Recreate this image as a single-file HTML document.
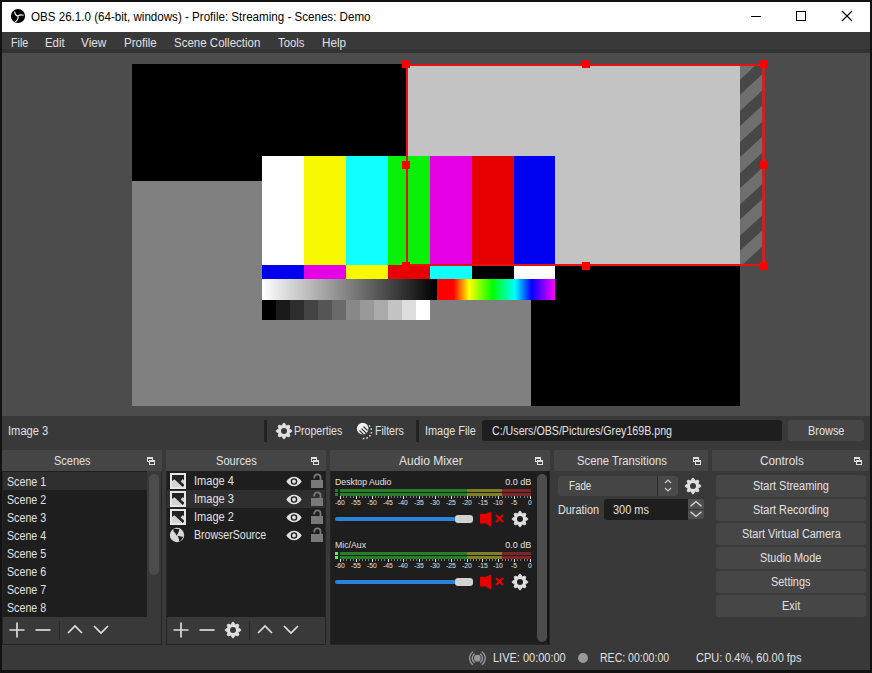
<!DOCTYPE html>
<html><head><meta charset="utf-8">
<style>
*{box-sizing:border-box;margin:0;padding:0}
html,body{width:872px;height:673px;overflow:hidden;background:#121212;font-family:"Liberation Sans",sans-serif;position:relative}
.a{position:absolute}
.t{position:absolute;white-space:pre}
svg{position:absolute;overflow:visible}
</style></head><body>
<div class="a" style="left:2px;top:2px;width:868px;height:30px;background:#fff;"></div>
<svg style="left:11px;top:9px" width="14" height="14" viewBox="0 0 14 14"><circle cx="7" cy="7" r="7.1" fill="#000"/><path d="M7 7Q4.2 6.6 3.6 2.6M7 7Q9.2 5.2 12.6 6.2M7 7Q7.6 10.6 4.4 12.9" fill="none" stroke="#fff" stroke-width="1.1"/></svg>
<div class="a" style="left:751px;top:16px;width:10px;height:1px;background:#000;"></div>
<div class="a" style="left:796px;top:11px;width:10px;height:10px;border:1px solid #000"></div>
<svg style="left:842px;top:11px" width="10" height="10"><path d="M0 0L10 10M10 0L0 10" stroke="#000" stroke-width="1.1"/></svg>
<div class="a" style="left:2px;top:32px;width:868px;height:21px;background:#3a393a;"></div>
<div class="a" style="left:2px;top:49px;width:868px;height:4px;background:#353435;"></div>
<div class="a" style="left:2px;top:53px;width:868px;height:363px;background:#4c4c4c;"></div>
<div class="a" style="left:132px;top:64px;width:608px;height:342px;background:#000;"></div>
<div class="a" style="left:132px;top:181px;width:399px;height:225px;background:#808080;"></div>
<div class="a" style="left:408px;top:66px;width:332px;height:198px;background:#c3c3c3;"></div>
<svg style="left:740px;top:66px;overflow:hidden" width="22" height="198" viewBox="0 0 22 198"><rect width="22" height="198" fill="#6f6f6f"/><path d="M0 -48.7L22 -68.9L22 -53.9L0 -33.7ZM0 -17.5L22 -37.7L22 -22.7L0 -2.5ZM0 13.7L22 -6.5L22 8.5L0 28.7ZM0 44.9L22 24.7L22 39.7L0 59.9ZM0 76.1L22 55.9L22 70.9L0 91.1ZM0 107.3L22 87.1L22 102.1L0 122.3ZM0 138.5L22 118.3L22 133.3L0 153.5ZM0 169.7L22 149.5L22 164.5L0 184.7ZM0 200.9L22 180.7L22 195.7L0 215.9ZM0 232.1L22 211.9L22 226.9L0 247.1Z" fill="#474747"/></svg>
<div class="a" style="left:262px;top:156px;width:42px;height:109px;background:#fff;"></div>
<div class="a" style="left:262px;top:265px;width:42px;height:14px;background:#0000f0;"></div>
<div class="a" style="left:304px;top:156px;width:42px;height:109px;background:#f8f800;"></div>
<div class="a" style="left:304px;top:265px;width:42px;height:14px;background:#e600e6;"></div>
<div class="a" style="left:346px;top:156px;width:42px;height:109px;background:#10ffff;"></div>
<div class="a" style="left:346px;top:265px;width:42px;height:14px;background:#f8f800;"></div>
<div class="a" style="left:388px;top:156px;width:42px;height:109px;background:#08f008;"></div>
<div class="a" style="left:388px;top:265px;width:42px;height:14px;background:#e60000;"></div>
<div class="a" style="left:430px;top:156px;width:42px;height:109px;background:#e600e6;"></div>
<div class="a" style="left:430px;top:265px;width:42px;height:14px;background:#10ffff;"></div>
<div class="a" style="left:472px;top:156px;width:42px;height:109px;background:#e60000;"></div>
<div class="a" style="left:472px;top:265px;width:42px;height:14px;background:#000;"></div>
<div class="a" style="left:514px;top:156px;width:41px;height:109px;background:#0000f0;"></div>
<div class="a" style="left:514px;top:265px;width:41px;height:14px;background:#fff;"></div>
<div class="a" style="left:262px;top:279px;width:175px;height:21px;background:#fff;background:linear-gradient(90deg,#fff,#000);"></div>
<div class="a" style="left:437px;top:279px;width:118px;height:21px;background:#f00;background:linear-gradient(90deg,#f00 0%,#f00 14%,#ff0 27%,#0f0 47%,#0ff 66%,#00f 80%,#f0f 100%);"></div>
<div class="a" style="left:262px;top:300px;width:14px;height:20px;background:rgb(0,0,0);"></div>
<div class="a" style="left:276px;top:300px;width:14px;height:20px;background:rgb(26,26,26);"></div>
<div class="a" style="left:290px;top:300px;width:14px;height:20px;background:rgb(45,45,45);"></div>
<div class="a" style="left:304px;top:300px;width:14px;height:20px;background:rgb(68,68,68);"></div>
<div class="a" style="left:318px;top:300px;width:14px;height:20px;background:rgb(85,85,85);"></div>
<div class="a" style="left:332px;top:300px;width:14px;height:20px;background:rgb(106,106,106);"></div>
<div class="a" style="left:346px;top:300px;width:14px;height:20px;background:rgb(136,136,136);"></div>
<div class="a" style="left:360px;top:300px;width:14px;height:20px;background:rgb(153,153,153);"></div>
<div class="a" style="left:374px;top:300px;width:14px;height:20px;background:rgb(170,170,170);"></div>
<div class="a" style="left:388px;top:300px;width:14px;height:20px;background:rgb(196,196,196);"></div>
<div class="a" style="left:402px;top:300px;width:14px;height:20px;background:rgb(221,221,221);"></div>
<div class="a" style="left:416px;top:300px;width:14px;height:20px;background:rgb(255,255,255);"></div>
<div class="a" style="left:406px;top:64px;width:359px;height:2px;background:#e61212;"></div>
<div class="a" style="left:406px;top:264px;width:359px;height:2px;background:#e61212;"></div>
<div class="a" style="left:406px;top:64px;width:2px;height:202px;background:#e61212;"></div>
<div class="a" style="left:762px;top:64px;width:3px;height:202px;background:#c82222;"></div>
<div class="a" style="left:402px;top:60px;width:8px;height:8px;background:#f00;"></div>
<div class="a" style="left:402px;top:161px;width:8px;height:8px;background:#f00;"></div>
<div class="a" style="left:402px;top:262px;width:8px;height:8px;background:#f00;"></div>
<div class="a" style="left:582px;top:60px;width:8px;height:8px;background:#f00;"></div>
<div class="a" style="left:582px;top:262px;width:8px;height:8px;background:#f00;"></div>
<div class="a" style="left:760px;top:60px;width:8px;height:8px;background:#f00;"></div>
<div class="a" style="left:760px;top:161px;width:8px;height:8px;background:#f00;"></div>
<div class="a" style="left:760px;top:262px;width:8px;height:8px;background:#f00;"></div>
<div class="a" style="left:2px;top:416px;width:868px;height:34px;background:#3a393a;"></div>
<div class="a" style="left:264px;top:420px;width:3px;height:22px;background:#222122;"></div>
<div class="a" style="left:416px;top:420px;width:3px;height:22px;background:#222122;"></div>
<svg style="left:276px;top:423px" width="16" height="16" viewBox="-8 -8 16 16"><path d="M5.33 -2.01L7.67 -0.69L7.67 0.69L5.33 2.01L5.19 2.35L5.91 4.93L4.93 5.91L2.35 5.19L2.01 5.33L0.69 7.67L-0.69 7.67L-2.01 5.33L-2.35 5.19L-4.93 5.91L-5.91 4.93L-5.19 2.35L-5.33 2.01L-7.67 0.69L-7.67 -0.69L-5.33 -2.01L-5.19 -2.35L-5.91 -4.93L-4.93 -5.91L-2.35 -5.19L-2.01 -5.33L-0.69 -7.67L0.69 -7.67L2.01 -5.33L2.35 -5.19L4.93 -5.91L5.91 -4.93L5.19 -2.35Z" fill="#e1e0e1" stroke="#e1e0e1" stroke-width="0.8" stroke-linejoin="round"/><circle r="3.0" fill="#3a393a"/></svg>
<svg style="left:356px;top:422px" width="18" height="18" viewBox="0 0 18 18"><circle cx="6.7" cy="6.6" r="5.8" fill="#f0f0f0"/><path d="M3.5 8.5L7.5 12.5M5.5 6.5L10.5 11.5M7.5 4.5L11.5 8.5" stroke="#3a393a" stroke-width="1.1"/><path d="M12.96 3.53A7.4 7.4 0 0 1 5.67 16.15" fill="none" stroke="#d8d8d8" stroke-width="1.5" stroke-dasharray="1.6 1.9"/></svg>
<div class="a" style="left:482px;top:420px;width:300px;height:21px;background:#1f1e1f;border-radius:3px;"></div>
<div class="a" style="left:788px;top:420px;width:76px;height:21px;background:#474647;border-radius:3px;"></div>
<div class="a" style="left:2px;top:450px;width:868px;height:195px;background:#3a393a;"></div>
<div class="a" style="left:2px;top:450px;width:160px;height:21px;background:#464546;"></div>
<div class="a" style="left:147px;top:457px;width:6px;height:5px;border:1px solid #ddd;border-top-width:2px"></div><div class="a" style="left:149px;top:460px;width:6px;height:5px;border:1px solid #ddd;border-top-width:2px;background:#464546"></div>
<div class="a" style="left:166px;top:450px;width:160px;height:21px;background:#464546;"></div>
<div class="a" style="left:311px;top:457px;width:6px;height:5px;border:1px solid #ddd;border-top-width:2px"></div><div class="a" style="left:313px;top:460px;width:6px;height:5px;border:1px solid #ddd;border-top-width:2px;background:#464546"></div>
<div class="a" style="left:330px;top:450px;width:220px;height:21px;background:#464546;"></div>
<div class="a" style="left:535px;top:457px;width:6px;height:5px;border:1px solid #ddd;border-top-width:2px"></div><div class="a" style="left:537px;top:460px;width:6px;height:5px;border:1px solid #ddd;border-top-width:2px;background:#464546"></div>
<div class="a" style="left:554px;top:450px;width:154px;height:21px;background:#464546;"></div>
<div class="a" style="left:693px;top:457px;width:6px;height:5px;border:1px solid #ddd;border-top-width:2px"></div><div class="a" style="left:695px;top:460px;width:6px;height:5px;border:1px solid #ddd;border-top-width:2px;background:#464546"></div>
<div class="a" style="left:712px;top:450px;width:157px;height:21px;background:#464546;"></div>
<div class="a" style="left:854px;top:457px;width:6px;height:5px;border:1px solid #ddd;border-top-width:2px"></div><div class="a" style="left:856px;top:460px;width:6px;height:5px;border:1px solid #ddd;border-top-width:2px;background:#464546"></div>
<div class="a" style="left:2px;top:471px;width:160px;height:146px;background:#1f1e1f;"></div>
<div class="a" style="left:3px;top:472px;width:145px;height:18px;background:#302f30;"></div>
<div class="a" style="left:147px;top:471px;width:15px;height:146px;background:#3a393a;"></div>
<div class="a" style="left:149px;top:474px;width:10px;height:101px;background:#4c4c4c;border-radius:5px;"></div>
<svg style="left:9px;top:622px" width="16" height="16"><path d="M8 0.5V15.5M0.5 8H15.5" stroke="#dcdbdc" stroke-width="1.7"/></svg>
<svg style="left:35px;top:622px" width="16" height="16"><path d="M0.5 8H15.5" stroke="#dcdbdc" stroke-width="1.7"/></svg>
<div class="a" style="left:59px;top:621px;width:1px;height:19px;background:#2a292a;"></div>
<svg style="left:67px;top:621px" width="16" height="16"><path d="M1 12L8 5L15 12" fill="none" stroke="#e1e0e1" stroke-width="1.7"/></svg>
<svg style="left:93px;top:621px" width="16" height="16"><path d="M1 5L8 12L15 5" fill="none" stroke="#e1e0e1" stroke-width="1.7"/></svg>
<div class="a" style="left:166px;top:471px;width:160px;height:146px;background:#1f1e1f;"></div>
<div class="a" style="left:166px;top:490px;width:160px;height:18px;background:#302f30;"></div>
<svg style="left:170px;top:473px" width="16" height="16" viewBox="0 0 16 16"><rect x="1" y="1" width="14" height="14" fill="#d4d4d4" stroke="#e6e6e6" stroke-width="2"/><path d="M2 2H14V7.2L12.8 6L10.6 8.6L14 11.6V12.6L12.8 13.9L4.4 6.2L2 8Z" fill="#232223"/></svg>
<svg style="left:286px;top:476px" width="16" height="11" viewBox="0 0 16 11"><path d="M0.3 5.5C4 -0.8 12 -0.8 15.7 5.5C12 11.8 4 11.8 0.3 5.5Z" fill="#e1e0e1"/><circle cx="8" cy="5.5" r="2.6" fill="#e1e0e1" stroke="#1f1e1f" stroke-width="1.4"/></svg>
<svg style="left:310px;top:473px" width="14" height="16" viewBox="0 0 14 16"><path d="M4.3 5.6V4.4A3.1 3.1 0 0 1 10.5 4.4V7.2" fill="none" stroke="#7a797a" stroke-width="1.8"/><rect x="1" y="7" width="12" height="8" fill="#7a797a"/></svg>
<svg style="left:170px;top:491px" width="16" height="16" viewBox="0 0 16 16"><rect x="1" y="1" width="14" height="14" fill="#d4d4d4" stroke="#e6e6e6" stroke-width="2"/><path d="M2 2H14V7.2L12.8 6L10.6 8.6L14 11.6V12.6L12.8 13.9L4.4 6.2L2 8Z" fill="#232223"/></svg>
<svg style="left:286px;top:494px" width="16" height="11" viewBox="0 0 16 11"><path d="M0.3 5.5C4 -0.8 12 -0.8 15.7 5.5C12 11.8 4 11.8 0.3 5.5Z" fill="#e1e0e1"/><circle cx="8" cy="5.5" r="2.6" fill="#e1e0e1" stroke="#1f1e1f" stroke-width="1.4"/></svg>
<svg style="left:310px;top:491px" width="14" height="16" viewBox="0 0 14 16"><path d="M4.3 5.6V4.4A3.1 3.1 0 0 1 10.5 4.4V7.2" fill="none" stroke="#7a797a" stroke-width="1.8"/><rect x="1" y="7" width="12" height="8" fill="#7a797a"/></svg>
<svg style="left:170px;top:509px" width="16" height="16" viewBox="0 0 16 16"><rect x="1" y="1" width="14" height="14" fill="#d4d4d4" stroke="#e6e6e6" stroke-width="2"/><path d="M2 2H14V7.2L12.8 6L10.6 8.6L14 11.6V12.6L12.8 13.9L4.4 6.2L2 8Z" fill="#232223"/></svg>
<svg style="left:286px;top:512px" width="16" height="11" viewBox="0 0 16 11"><path d="M0.3 5.5C4 -0.8 12 -0.8 15.7 5.5C12 11.8 4 11.8 0.3 5.5Z" fill="#e1e0e1"/><circle cx="8" cy="5.5" r="2.6" fill="#e1e0e1" stroke="#1f1e1f" stroke-width="1.4"/></svg>
<svg style="left:310px;top:509px" width="14" height="16" viewBox="0 0 14 16"><path d="M4.3 5.6V4.4A3.1 3.1 0 0 1 10.5 4.4V7.2" fill="none" stroke="#7a797a" stroke-width="1.8"/><rect x="1" y="7" width="12" height="8" fill="#7a797a"/></svg>
<svg style="left:169px;top:527px" width="16" height="16" viewBox="0 0 16 16"><circle cx="8" cy="8" r="7.2" fill="#d8d8d8"/><path d="M4.4 1.6L10.4 2.2L9.4 5.4L7.6 8.8L6.4 6.2L4.6 4.6Z M8.6 8.8L14.2 10L11.8 13.4L10.2 14.3L9.8 11.4Z" fill="#1f1e1f"/></svg>
<svg style="left:286px;top:530px" width="16" height="11" viewBox="0 0 16 11"><path d="M0.3 5.5C4 -0.8 12 -0.8 15.7 5.5C12 11.8 4 11.8 0.3 5.5Z" fill="#e1e0e1"/><circle cx="8" cy="5.5" r="2.6" fill="#e1e0e1" stroke="#1f1e1f" stroke-width="1.4"/></svg>
<svg style="left:310px;top:527px" width="14" height="16" viewBox="0 0 14 16"><path d="M4.3 5.6V4.4A3.1 3.1 0 0 1 10.5 4.4V7.2" fill="none" stroke="#7a797a" stroke-width="1.8"/><rect x="1" y="7" width="12" height="8" fill="#7a797a"/></svg>
<svg style="left:173px;top:622px" width="16" height="16"><path d="M8 0.5V15.5M0.5 8H15.5" stroke="#dcdbdc" stroke-width="1.7"/></svg>
<svg style="left:199px;top:622px" width="16" height="16"><path d="M0.5 8H15.5" stroke="#dcdbdc" stroke-width="1.7"/></svg>
<svg style="left:225px;top:622px" width="16" height="16" viewBox="-8 -8 16 16"><path d="M5.33 -2.01L7.67 -0.69L7.67 0.69L5.33 2.01L5.19 2.35L5.91 4.93L4.93 5.91L2.35 5.19L2.01 5.33L0.69 7.67L-0.69 7.67L-2.01 5.33L-2.35 5.19L-4.93 5.91L-5.91 4.93L-5.19 2.35L-5.33 2.01L-7.67 0.69L-7.67 -0.69L-5.33 -2.01L-5.19 -2.35L-5.91 -4.93L-4.93 -5.91L-2.35 -5.19L-2.01 -5.33L-0.69 -7.67L0.69 -7.67L2.01 -5.33L2.35 -5.19L4.93 -5.91L5.91 -4.93L5.19 -2.35Z" fill="#e1e0e1" stroke="#e1e0e1" stroke-width="0.8" stroke-linejoin="round"/><circle r="3.0" fill="#3a393a"/></svg>
<div class="a" style="left:249px;top:621px;width:1px;height:19px;background:#2a292a;"></div>
<svg style="left:257px;top:621px" width="16" height="16"><path d="M1 12L8 5L15 12" fill="none" stroke="#e1e0e1" stroke-width="1.7"/></svg>
<svg style="left:283px;top:621px" width="16" height="16"><path d="M1 5L8 12L15 5" fill="none" stroke="#e1e0e1" stroke-width="1.7"/></svg>
<div class="a" style="left:330px;top:471px;width:220px;height:174px;background:#1f1e1f;"></div>
<div class="a" style="left:547px;top:471px;width:3px;height:174px;background:#171617;"></div>
<div class="a" style="left:537px;top:474px;width:10px;height:168px;background:#4c4c4c;border-radius:5px;"></div>
<div class="a" style="left:335px;top:489px;width:3px;height:3px;background:#267f26;"></div>
<div class="a" style="left:340px;top:489px;width:127px;height:3px;background:#267f26;"></div>
<div class="a" style="left:467px;top:489px;width:35px;height:3px;background:#7f7f26;"></div>
<div class="a" style="left:502px;top:489px;width:29px;height:3px;background:#7f2626;"></div>
<div class="a" style="left:335px;top:493px;width:3px;height:3px;background:#267f26;"></div>
<div class="a" style="left:340px;top:493px;width:127px;height:3px;background:#267f26;"></div>
<div class="a" style="left:467px;top:493px;width:35px;height:3px;background:#7f7f26;"></div>
<div class="a" style="left:502px;top:493px;width:29px;height:3px;background:#7f2626;"></div>
<div class="a" style="left:340px;top:496px;width:1px;height:3px;background:#e1e0e1;"></div>
<div class="a" style="left:343px;top:496px;width:1px;height:2px;background:#7a797a;"></div>
<div class="a" style="left:346px;top:496px;width:1px;height:2px;background:#7a797a;"></div>
<div class="a" style="left:350px;top:496px;width:1px;height:2px;background:#7a797a;"></div>
<div class="a" style="left:353px;top:496px;width:1px;height:2px;background:#7a797a;"></div>
<div class="a" style="left:356px;top:496px;width:1px;height:3px;background:#e1e0e1;"></div>
<div class="a" style="left:359px;top:496px;width:1px;height:2px;background:#7a797a;"></div>
<div class="a" style="left:362px;top:496px;width:1px;height:2px;background:#7a797a;"></div>
<div class="a" style="left:365px;top:496px;width:1px;height:2px;background:#7a797a;"></div>
<div class="a" style="left:368px;top:496px;width:1px;height:2px;background:#7a797a;"></div>
<div class="a" style="left:372px;top:496px;width:1px;height:3px;background:#e1e0e1;"></div>
<div class="a" style="left:375px;top:496px;width:1px;height:2px;background:#7a797a;"></div>
<div class="a" style="left:378px;top:496px;width:1px;height:2px;background:#7a797a;"></div>
<div class="a" style="left:381px;top:496px;width:1px;height:2px;background:#7a797a;"></div>
<div class="a" style="left:384px;top:496px;width:1px;height:2px;background:#7a797a;"></div>
<div class="a" style="left:388px;top:496px;width:1px;height:3px;background:#e1e0e1;"></div>
<div class="a" style="left:391px;top:496px;width:1px;height:2px;background:#7a797a;"></div>
<div class="a" style="left:394px;top:496px;width:1px;height:2px;background:#7a797a;"></div>
<div class="a" style="left:397px;top:496px;width:1px;height:2px;background:#7a797a;"></div>
<div class="a" style="left:400px;top:496px;width:1px;height:2px;background:#7a797a;"></div>
<div class="a" style="left:403px;top:496px;width:1px;height:3px;background:#e1e0e1;"></div>
<div class="a" style="left:406px;top:496px;width:1px;height:2px;background:#7a797a;"></div>
<div class="a" style="left:410px;top:496px;width:1px;height:2px;background:#7a797a;"></div>
<div class="a" style="left:413px;top:496px;width:1px;height:2px;background:#7a797a;"></div>
<div class="a" style="left:416px;top:496px;width:1px;height:2px;background:#7a797a;"></div>
<div class="a" style="left:419px;top:496px;width:1px;height:3px;background:#e1e0e1;"></div>
<div class="a" style="left:422px;top:496px;width:1px;height:2px;background:#7a797a;"></div>
<div class="a" style="left:426px;top:496px;width:1px;height:2px;background:#7a797a;"></div>
<div class="a" style="left:429px;top:496px;width:1px;height:2px;background:#7a797a;"></div>
<div class="a" style="left:432px;top:496px;width:1px;height:2px;background:#7a797a;"></div>
<div class="a" style="left:435px;top:496px;width:1px;height:3px;background:#e1e0e1;"></div>
<div class="a" style="left:438px;top:496px;width:1px;height:2px;background:#7a797a;"></div>
<div class="a" style="left:441px;top:496px;width:1px;height:2px;background:#7a797a;"></div>
<div class="a" style="left:444px;top:496px;width:1px;height:2px;background:#7a797a;"></div>
<div class="a" style="left:448px;top:496px;width:1px;height:2px;background:#7a797a;"></div>
<div class="a" style="left:451px;top:496px;width:1px;height:3px;background:#e1e0e1;"></div>
<div class="a" style="left:454px;top:496px;width:1px;height:2px;background:#7a797a;"></div>
<div class="a" style="left:457px;top:496px;width:1px;height:2px;background:#7a797a;"></div>
<div class="a" style="left:460px;top:496px;width:1px;height:2px;background:#7a797a;"></div>
<div class="a" style="left:464px;top:496px;width:1px;height:2px;background:#7a797a;"></div>
<div class="a" style="left:467px;top:496px;width:1px;height:3px;background:#e1e0e1;"></div>
<div class="a" style="left:470px;top:496px;width:1px;height:2px;background:#7a797a;"></div>
<div class="a" style="left:473px;top:496px;width:1px;height:2px;background:#7a797a;"></div>
<div class="a" style="left:476px;top:496px;width:1px;height:2px;background:#7a797a;"></div>
<div class="a" style="left:479px;top:496px;width:1px;height:2px;background:#7a797a;"></div>
<div class="a" style="left:482px;top:496px;width:1px;height:3px;background:#e1e0e1;"></div>
<div class="a" style="left:486px;top:496px;width:1px;height:2px;background:#7a797a;"></div>
<div class="a" style="left:489px;top:496px;width:1px;height:2px;background:#7a797a;"></div>
<div class="a" style="left:492px;top:496px;width:1px;height:2px;background:#7a797a;"></div>
<div class="a" style="left:495px;top:496px;width:1px;height:2px;background:#7a797a;"></div>
<div class="a" style="left:498px;top:496px;width:1px;height:3px;background:#e1e0e1;"></div>
<div class="a" style="left:502px;top:496px;width:1px;height:2px;background:#7a797a;"></div>
<div class="a" style="left:505px;top:496px;width:1px;height:2px;background:#7a797a;"></div>
<div class="a" style="left:508px;top:496px;width:1px;height:2px;background:#7a797a;"></div>
<div class="a" style="left:511px;top:496px;width:1px;height:2px;background:#7a797a;"></div>
<div class="a" style="left:514px;top:496px;width:1px;height:3px;background:#e1e0e1;"></div>
<div class="a" style="left:517px;top:496px;width:1px;height:2px;background:#7a797a;"></div>
<div class="a" style="left:520px;top:496px;width:1px;height:2px;background:#7a797a;"></div>
<div class="a" style="left:524px;top:496px;width:1px;height:2px;background:#7a797a;"></div>
<div class="a" style="left:527px;top:496px;width:1px;height:2px;background:#7a797a;"></div>
<div class="a" style="left:530px;top:496px;width:1px;height:3px;background:#e1e0e1;"></div>
<div class="a" style="left:335px;top:517px;width:121px;height:4px;background:#2a82da;border-radius:2px;"></div>
<div class="a" style="left:455px;top:515px;width:18px;height:8px;background:#d2d2d2;border-radius:3px;"></div>
<svg style="left:480px;top:511px" width="12" height="17" viewBox="0 0 12 17"><path d="M0 2.8H6L11 0.4V15.8L6 12.4H0Z" fill="#e60000"/></svg>
<svg style="left:495px;top:514px" width="9" height="9"><path d="M1 1L8 8M8 1L1 8" stroke="#e00000" stroke-width="2.2"/></svg>
<svg style="left:512px;top:511px" width="16" height="16" viewBox="-8 -8 16 16"><path d="M5.33 -2.01L7.67 -0.69L7.67 0.69L5.33 2.01L5.19 2.35L5.91 4.93L4.93 5.91L2.35 5.19L2.01 5.33L0.69 7.67L-0.69 7.67L-2.01 5.33L-2.35 5.19L-4.93 5.91L-5.91 4.93L-5.19 2.35L-5.33 2.01L-7.67 0.69L-7.67 -0.69L-5.33 -2.01L-5.19 -2.35L-5.91 -4.93L-4.93 -5.91L-2.35 -5.19L-2.01 -5.33L-0.69 -7.67L0.69 -7.67L2.01 -5.33L2.35 -5.19L4.93 -5.91L5.91 -4.93L5.19 -2.35Z" fill="#e1e0e1" stroke="#e1e0e1" stroke-width="0.8" stroke-linejoin="round"/><circle r="3.0" fill="#1f1e1f"/></svg>
<div class="a" style="left:335px;top:552px;width:3px;height:3px;background:#4cff4c;"></div>
<div class="a" style="left:340px;top:552px;width:127px;height:3px;background:#267f26;"></div>
<div class="a" style="left:467px;top:552px;width:35px;height:3px;background:#7f7f26;"></div>
<div class="a" style="left:502px;top:552px;width:29px;height:3px;background:#7f2626;"></div>
<div class="a" style="left:335px;top:556px;width:3px;height:3px;background:#4cff4c;"></div>
<div class="a" style="left:340px;top:556px;width:127px;height:3px;background:#267f26;"></div>
<div class="a" style="left:467px;top:556px;width:35px;height:3px;background:#7f7f26;"></div>
<div class="a" style="left:502px;top:556px;width:29px;height:3px;background:#7f2626;"></div>
<div class="a" style="left:340px;top:559px;width:1px;height:3px;background:#e1e0e1;"></div>
<div class="a" style="left:343px;top:559px;width:1px;height:2px;background:#7a797a;"></div>
<div class="a" style="left:346px;top:559px;width:1px;height:2px;background:#7a797a;"></div>
<div class="a" style="left:350px;top:559px;width:1px;height:2px;background:#7a797a;"></div>
<div class="a" style="left:353px;top:559px;width:1px;height:2px;background:#7a797a;"></div>
<div class="a" style="left:356px;top:559px;width:1px;height:3px;background:#e1e0e1;"></div>
<div class="a" style="left:359px;top:559px;width:1px;height:2px;background:#7a797a;"></div>
<div class="a" style="left:362px;top:559px;width:1px;height:2px;background:#7a797a;"></div>
<div class="a" style="left:365px;top:559px;width:1px;height:2px;background:#7a797a;"></div>
<div class="a" style="left:368px;top:559px;width:1px;height:2px;background:#7a797a;"></div>
<div class="a" style="left:372px;top:559px;width:1px;height:3px;background:#e1e0e1;"></div>
<div class="a" style="left:375px;top:559px;width:1px;height:2px;background:#7a797a;"></div>
<div class="a" style="left:378px;top:559px;width:1px;height:2px;background:#7a797a;"></div>
<div class="a" style="left:381px;top:559px;width:1px;height:2px;background:#7a797a;"></div>
<div class="a" style="left:384px;top:559px;width:1px;height:2px;background:#7a797a;"></div>
<div class="a" style="left:388px;top:559px;width:1px;height:3px;background:#e1e0e1;"></div>
<div class="a" style="left:391px;top:559px;width:1px;height:2px;background:#7a797a;"></div>
<div class="a" style="left:394px;top:559px;width:1px;height:2px;background:#7a797a;"></div>
<div class="a" style="left:397px;top:559px;width:1px;height:2px;background:#7a797a;"></div>
<div class="a" style="left:400px;top:559px;width:1px;height:2px;background:#7a797a;"></div>
<div class="a" style="left:403px;top:559px;width:1px;height:3px;background:#e1e0e1;"></div>
<div class="a" style="left:406px;top:559px;width:1px;height:2px;background:#7a797a;"></div>
<div class="a" style="left:410px;top:559px;width:1px;height:2px;background:#7a797a;"></div>
<div class="a" style="left:413px;top:559px;width:1px;height:2px;background:#7a797a;"></div>
<div class="a" style="left:416px;top:559px;width:1px;height:2px;background:#7a797a;"></div>
<div class="a" style="left:419px;top:559px;width:1px;height:3px;background:#e1e0e1;"></div>
<div class="a" style="left:422px;top:559px;width:1px;height:2px;background:#7a797a;"></div>
<div class="a" style="left:426px;top:559px;width:1px;height:2px;background:#7a797a;"></div>
<div class="a" style="left:429px;top:559px;width:1px;height:2px;background:#7a797a;"></div>
<div class="a" style="left:432px;top:559px;width:1px;height:2px;background:#7a797a;"></div>
<div class="a" style="left:435px;top:559px;width:1px;height:3px;background:#e1e0e1;"></div>
<div class="a" style="left:438px;top:559px;width:1px;height:2px;background:#7a797a;"></div>
<div class="a" style="left:441px;top:559px;width:1px;height:2px;background:#7a797a;"></div>
<div class="a" style="left:444px;top:559px;width:1px;height:2px;background:#7a797a;"></div>
<div class="a" style="left:448px;top:559px;width:1px;height:2px;background:#7a797a;"></div>
<div class="a" style="left:451px;top:559px;width:1px;height:3px;background:#e1e0e1;"></div>
<div class="a" style="left:454px;top:559px;width:1px;height:2px;background:#7a797a;"></div>
<div class="a" style="left:457px;top:559px;width:1px;height:2px;background:#7a797a;"></div>
<div class="a" style="left:460px;top:559px;width:1px;height:2px;background:#7a797a;"></div>
<div class="a" style="left:464px;top:559px;width:1px;height:2px;background:#7a797a;"></div>
<div class="a" style="left:467px;top:559px;width:1px;height:3px;background:#e1e0e1;"></div>
<div class="a" style="left:470px;top:559px;width:1px;height:2px;background:#7a797a;"></div>
<div class="a" style="left:473px;top:559px;width:1px;height:2px;background:#7a797a;"></div>
<div class="a" style="left:476px;top:559px;width:1px;height:2px;background:#7a797a;"></div>
<div class="a" style="left:479px;top:559px;width:1px;height:2px;background:#7a797a;"></div>
<div class="a" style="left:482px;top:559px;width:1px;height:3px;background:#e1e0e1;"></div>
<div class="a" style="left:486px;top:559px;width:1px;height:2px;background:#7a797a;"></div>
<div class="a" style="left:489px;top:559px;width:1px;height:2px;background:#7a797a;"></div>
<div class="a" style="left:492px;top:559px;width:1px;height:2px;background:#7a797a;"></div>
<div class="a" style="left:495px;top:559px;width:1px;height:2px;background:#7a797a;"></div>
<div class="a" style="left:498px;top:559px;width:1px;height:3px;background:#e1e0e1;"></div>
<div class="a" style="left:502px;top:559px;width:1px;height:2px;background:#7a797a;"></div>
<div class="a" style="left:505px;top:559px;width:1px;height:2px;background:#7a797a;"></div>
<div class="a" style="left:508px;top:559px;width:1px;height:2px;background:#7a797a;"></div>
<div class="a" style="left:511px;top:559px;width:1px;height:2px;background:#7a797a;"></div>
<div class="a" style="left:514px;top:559px;width:1px;height:3px;background:#e1e0e1;"></div>
<div class="a" style="left:517px;top:559px;width:1px;height:2px;background:#7a797a;"></div>
<div class="a" style="left:520px;top:559px;width:1px;height:2px;background:#7a797a;"></div>
<div class="a" style="left:524px;top:559px;width:1px;height:2px;background:#7a797a;"></div>
<div class="a" style="left:527px;top:559px;width:1px;height:2px;background:#7a797a;"></div>
<div class="a" style="left:530px;top:559px;width:1px;height:3px;background:#e1e0e1;"></div>
<div class="a" style="left:335px;top:580px;width:121px;height:4px;background:#2a82da;border-radius:2px;"></div>
<div class="a" style="left:455px;top:578px;width:18px;height:8px;background:#d2d2d2;border-radius:3px;"></div>
<svg style="left:480px;top:574px" width="12" height="17" viewBox="0 0 12 17"><path d="M0 2.8H6L11 0.4V15.8L6 12.4H0Z" fill="#e60000"/></svg>
<svg style="left:495px;top:577px" width="9" height="9"><path d="M1 1L8 8M8 1L1 8" stroke="#e00000" stroke-width="2.2"/></svg>
<svg style="left:512px;top:574px" width="16" height="16" viewBox="-8 -8 16 16"><path d="M5.33 -2.01L7.67 -0.69L7.67 0.69L5.33 2.01L5.19 2.35L5.91 4.93L4.93 5.91L2.35 5.19L2.01 5.33L0.69 7.67L-0.69 7.67L-2.01 5.33L-2.35 5.19L-4.93 5.91L-5.91 4.93L-5.19 2.35L-5.33 2.01L-7.67 0.69L-7.67 -0.69L-5.33 -2.01L-5.19 -2.35L-5.91 -4.93L-4.93 -5.91L-2.35 -5.19L-2.01 -5.33L-0.69 -7.67L0.69 -7.67L2.01 -5.33L2.35 -5.19L4.93 -5.91L5.91 -4.93L5.19 -2.35Z" fill="#e1e0e1" stroke="#e1e0e1" stroke-width="0.8" stroke-linejoin="round"/><circle r="3.0" fill="#1f1e1f"/></svg>
<div class="a" style="left:558px;top:476px;width:120px;height:20px;background:#464546;border-radius:3px;"></div>
<div class="a" style="left:658px;top:476px;width:20px;height:20px;background:#4a494a;border-radius:0 3px 3px 0;"></div>
<div class="a" style="left:657px;top:476px;width:1px;height:20px;background:#2e2d2e;"></div>
<svg style="left:663px;top:478px" width="10" height="15"><path d="M2 5L5 2L8 5M2 10L5 13L8 10" fill="none" stroke="#ccc" stroke-width="1.2"/></svg>
<svg style="left:685px;top:478px" width="16" height="16" viewBox="-8 -8 16 16"><path d="M5.33 -2.01L7.67 -0.69L7.67 0.69L5.33 2.01L5.19 2.35L5.91 4.93L4.93 5.91L2.35 5.19L2.01 5.33L0.69 7.67L-0.69 7.67L-2.01 5.33L-2.35 5.19L-4.93 5.91L-5.91 4.93L-5.19 2.35L-5.33 2.01L-7.67 0.69L-7.67 -0.69L-5.33 -2.01L-5.19 -2.35L-5.91 -4.93L-4.93 -5.91L-2.35 -5.19L-2.01 -5.33L-0.69 -7.67L0.69 -7.67L2.01 -5.33L2.35 -5.19L4.93 -5.91L5.91 -4.93L5.19 -2.35Z" fill="#e1e0e1" stroke="#e1e0e1" stroke-width="0.8" stroke-linejoin="round"/><circle r="3.0" fill="#3a393a"/></svg>
<div class="a" style="left:604px;top:499px;width:84px;height:21px;background:#1f1e1f;border-radius:3px 0 0 3px;"></div>
<div class="a" style="left:688px;top:499px;width:16px;height:10px;background:#504f50;border-radius:0 3px 0 0;"></div>
<div class="a" style="left:688px;top:510px;width:16px;height:9px;background:#504f50;border-radius:0 0 3px 0;"></div>
<svg style="left:688px;top:499px" width="16" height="21"><path d="M2.5 7.2L8 2.6L13.5 7.2M2.5 12.8L8 17.4L13.5 12.8" fill="none" stroke="#dcdcdc" stroke-width="1.3"/></svg>
<div class="a" style="left:716px;top:475px;width:150px;height:22px;background:#474647;border-radius:3px;"></div>
<div class="a" style="left:716px;top:499px;width:150px;height:22px;background:#474647;border-radius:3px;"></div>
<div class="a" style="left:716px;top:523px;width:150px;height:22px;background:#474647;border-radius:3px;"></div>
<div class="a" style="left:716px;top:547px;width:150px;height:22px;background:#474647;border-radius:3px;"></div>
<div class="a" style="left:716px;top:571px;width:150px;height:22px;background:#474647;border-radius:3px;"></div>
<div class="a" style="left:716px;top:595px;width:150px;height:22px;background:#474647;border-radius:3px;"></div>
<div class="a" style="left:2px;top:471px;width:160px;height:174px;border:1px solid #252425;border-top:none"></div>
<div class="a" style="left:166px;top:471px;width:160px;height:174px;border:1px solid #252425;border-top:none"></div>
<div class="a" style="left:330px;top:471px;width:220px;height:174px;border:1px solid #252425;border-top:none"></div>
<div class="a" style="left:2px;top:645px;width:868px;height:25px;background:#3a393a;"></div>
<svg style="left:467px;top:651px" width="21" height="15" viewBox="0 0 21 15"><circle cx="10.4" cy="7.2" r="3.4" fill="#9a999a"/><path d="M7.64 2.79A5.2 5.2 0 0 0 7.64 11.61M13.16 2.79A5.2 5.2 0 0 1 13.16 11.61M6.04 0.73A7.8 7.8 0 0 0 6.04 13.67M14.76 0.73A7.8 7.8 0 0 1 14.76 13.67" fill="none" stroke="#9a999a" stroke-width="1.4"/></svg>
<div class="a" style="left:578px;top:653px;width:10px;height:10px;border-radius:5px;background:#999"></div>
<div class="t" style="left:31.40px;top:9.14px;font-size:12px;line-height:16px;color:#000;transform:scaleX(0.9659);transform-origin:0 0;">OBS 26.1.0 (64-bit, windows) - Profile: Streaming - Scenes: Demo</div>
<div class="t" style="left:10.80px;top:35.04px;font-size:12px;line-height:16px;color:#e1e0e1;transform:scaleX(0.8892);transform-origin:0 0;">File</div>
<div class="t" style="left:45.20px;top:35.04px;font-size:12px;line-height:16px;color:#e1e0e1;transform:scaleX(0.9523);transform-origin:0 0;">Edit</div>
<div class="t" style="left:81.40px;top:35.04px;font-size:12px;line-height:16px;color:#e1e0e1;transform:scaleX(0.9807);transform-origin:0 0;">View</div>
<div class="t" style="left:123.90px;top:35.04px;font-size:12px;line-height:16px;color:#e1e0e1;transform:scaleX(0.9643);transform-origin:0 0;">Profile</div>
<div class="t" style="left:173.80px;top:35.04px;font-size:12px;line-height:16px;color:#e1e0e1;transform:scaleX(0.9593);transform-origin:0 0;">Scene Collection</div>
<div class="t" style="left:278.10px;top:35.04px;font-size:12px;line-height:16px;color:#e1e0e1;transform:scaleX(0.9423);transform-origin:0 0;">Tools</div>
<div class="t" style="left:321.70px;top:35.04px;font-size:12px;line-height:16px;color:#e1e0e1;transform:scaleX(0.9762);transform-origin:0 0;">Help</div>
<div class="t" style="left:7.90px;top:422.64px;font-size:12px;line-height:16px;color:#e1e0e1;transform:scaleX(0.9294);transform-origin:0 0;">Image 3</div>
<div class="t" style="left:294.00px;top:422.84px;font-size:12px;line-height:16px;color:#e1e0e1;transform:scaleX(0.8811);transform-origin:0 0;">Properties</div>
<div class="t" style="left:375.00px;top:422.84px;font-size:12px;line-height:16px;color:#e1e0e1;transform:scaleX(0.8815);transform-origin:0 0;">Filters</div>
<div class="t" style="left:425.20px;top:422.84px;font-size:12px;line-height:16px;color:#e1e0e1;transform:scaleX(0.9066);transform-origin:0 0;">Image File</div>
<div class="t" style="left:491.50px;top:422.84px;font-size:12px;line-height:16px;color:#e1e0e1;transform:scaleX(0.8878);transform-origin:0 0;">C:/Users/OBS/Pictures/Grey169B.png</div>
<div class="t" style="left:807.79px;top:422.84px;font-size:12px;line-height:16px;color:#e1e0e1;transform:scaleX(0.9100);transform-origin:0 0;">Browse</div>
<div class="t" style="left:54.30px;top:452.94px;font-size:12px;line-height:16px;color:#e1e0e1;transform:scaleX(0.9143);transform-origin:0 0;">Scenes</div>
<div class="t" style="left:216.15px;top:452.94px;font-size:12px;line-height:16px;color:#e1e0e1;transform:scaleX(0.9243);transform-origin:0 0;">Sources</div>
<div class="t" style="left:399.05px;top:452.94px;font-size:12px;line-height:16px;color:#e1e0e1;transform:scaleX(1.0054);transform-origin:0 0;">Audio Mixer</div>
<div class="t" style="left:577.05px;top:452.94px;font-size:12px;line-height:16px;color:#e1e0e1;transform:scaleX(0.9424);transform-origin:0 0;">Scene Transitions</div>
<div class="t" style="left:759.50px;top:452.94px;font-size:12px;line-height:16px;color:#e1e0e1;transform:scaleX(0.9801);transform-origin:0 0;">Controls</div>
<div class="t" style="left:6.50px;top:473.84px;font-size:12px;line-height:16px;color:#e1e0e1;transform:scaleX(0.8900);transform-origin:0 0;">Scene 1</div>
<div class="t" style="left:6.50px;top:491.84px;font-size:12px;line-height:16px;color:#e1e0e1;transform:scaleX(0.8900);transform-origin:0 0;">Scene 2</div>
<div class="t" style="left:6.50px;top:509.84px;font-size:12px;line-height:16px;color:#e1e0e1;transform:scaleX(0.8900);transform-origin:0 0;">Scene 3</div>
<div class="t" style="left:6.50px;top:527.84px;font-size:12px;line-height:16px;color:#e1e0e1;transform:scaleX(0.8900);transform-origin:0 0;">Scene 4</div>
<div class="t" style="left:6.50px;top:545.84px;font-size:12px;line-height:16px;color:#e1e0e1;transform:scaleX(0.8900);transform-origin:0 0;">Scene 5</div>
<div class="t" style="left:6.50px;top:563.84px;font-size:12px;line-height:16px;color:#e1e0e1;transform:scaleX(0.8900);transform-origin:0 0;">Scene 6</div>
<div class="t" style="left:6.50px;top:581.84px;font-size:12px;line-height:16px;color:#e1e0e1;transform:scaleX(0.8900);transform-origin:0 0;">Scene 7</div>
<div class="t" style="left:6.50px;top:599.84px;font-size:12px;line-height:16px;color:#e1e0e1;transform:scaleX(0.8900);transform-origin:0 0;">Scene 8</div>
<div class="t" style="left:193.80px;top:473.34px;font-size:12px;line-height:16px;color:#e1e0e1;transform:scaleX(0.9200);transform-origin:0 0;">Image 4</div>
<div class="t" style="left:193.80px;top:491.34px;font-size:12px;line-height:16px;color:#e1e0e1;transform:scaleX(0.9200);transform-origin:0 0;">Image 3</div>
<div class="t" style="left:193.80px;top:509.34px;font-size:12px;line-height:16px;color:#e1e0e1;transform:scaleX(0.9200);transform-origin:0 0;">Image 2</div>
<div class="t" style="left:193.80px;top:527.34px;font-size:12px;line-height:16px;color:#e1e0e1;transform:scaleX(0.8800);transform-origin:0 0;">BrowserSource</div>
<div class="t" style="left:334.90px;top:476.08px;font-size:9px;line-height:12px;color:#e1e0e1;transform:scaleX(0.9700);transform-origin:0 0;">Desktop Audio</div>
<div class="t" style="left:505.20px;top:476.08px;font-size:9px;line-height:12px;color:#e1e0e1;">0.0 dB</div>
<div class="t" style="left:335.09px;top:497.67px;font-size:7px;line-height:9px;color:#e1e0e1;transform:scaleX(0.9700);transform-origin:0 0;">-60</div>
<div class="t" style="left:350.92px;top:497.67px;font-size:7px;line-height:9px;color:#e1e0e1;transform:scaleX(0.9700);transform-origin:0 0;">-55</div>
<div class="t" style="left:366.76px;top:497.67px;font-size:7px;line-height:9px;color:#e1e0e1;transform:scaleX(0.9700);transform-origin:0 0;">-50</div>
<div class="t" style="left:382.59px;top:497.67px;font-size:7px;line-height:9px;color:#e1e0e1;transform:scaleX(0.9700);transform-origin:0 0;">-45</div>
<div class="t" style="left:398.42px;top:497.67px;font-size:7px;line-height:9px;color:#e1e0e1;transform:scaleX(0.9700);transform-origin:0 0;">-40</div>
<div class="t" style="left:414.26px;top:497.67px;font-size:7px;line-height:9px;color:#e1e0e1;transform:scaleX(0.9700);transform-origin:0 0;">-35</div>
<div class="t" style="left:430.09px;top:497.67px;font-size:7px;line-height:9px;color:#e1e0e1;transform:scaleX(0.9700);transform-origin:0 0;">-30</div>
<div class="t" style="left:445.92px;top:497.67px;font-size:7px;line-height:9px;color:#e1e0e1;transform:scaleX(0.9700);transform-origin:0 0;">-25</div>
<div class="t" style="left:461.76px;top:497.67px;font-size:7px;line-height:9px;color:#e1e0e1;transform:scaleX(0.9700);transform-origin:0 0;">-20</div>
<div class="t" style="left:477.59px;top:497.67px;font-size:7px;line-height:9px;color:#e1e0e1;transform:scaleX(0.9700);transform-origin:0 0;">-15</div>
<div class="t" style="left:493.42px;top:497.67px;font-size:7px;line-height:9px;color:#e1e0e1;transform:scaleX(0.9700);transform-origin:0 0;">-10</div>
<div class="t" style="left:511.14px;top:497.67px;font-size:7px;line-height:9px;color:#e1e0e1;transform:scaleX(0.9700);transform-origin:0 0;">-5</div>
<div class="t" style="left:528.11px;top:497.67px;font-size:7px;line-height:9px;color:#e1e0e1;transform:scaleX(0.9700);transform-origin:0 0;">0</div>
<div class="t" style="left:334.90px;top:539.08px;font-size:9px;line-height:12px;color:#e1e0e1;transform:scaleX(0.9700);transform-origin:0 0;">Mic/Aux</div>
<div class="t" style="left:505.20px;top:539.08px;font-size:9px;line-height:12px;color:#e1e0e1;">0.0 dB</div>
<div class="t" style="left:335.09px;top:560.67px;font-size:7px;line-height:9px;color:#e1e0e1;transform:scaleX(0.9700);transform-origin:0 0;">-60</div>
<div class="t" style="left:350.92px;top:560.67px;font-size:7px;line-height:9px;color:#e1e0e1;transform:scaleX(0.9700);transform-origin:0 0;">-55</div>
<div class="t" style="left:366.76px;top:560.67px;font-size:7px;line-height:9px;color:#e1e0e1;transform:scaleX(0.9700);transform-origin:0 0;">-50</div>
<div class="t" style="left:382.59px;top:560.67px;font-size:7px;line-height:9px;color:#e1e0e1;transform:scaleX(0.9700);transform-origin:0 0;">-45</div>
<div class="t" style="left:398.42px;top:560.67px;font-size:7px;line-height:9px;color:#e1e0e1;transform:scaleX(0.9700);transform-origin:0 0;">-40</div>
<div class="t" style="left:414.26px;top:560.67px;font-size:7px;line-height:9px;color:#e1e0e1;transform:scaleX(0.9700);transform-origin:0 0;">-35</div>
<div class="t" style="left:430.09px;top:560.67px;font-size:7px;line-height:9px;color:#e1e0e1;transform:scaleX(0.9700);transform-origin:0 0;">-30</div>
<div class="t" style="left:445.92px;top:560.67px;font-size:7px;line-height:9px;color:#e1e0e1;transform:scaleX(0.9700);transform-origin:0 0;">-25</div>
<div class="t" style="left:461.76px;top:560.67px;font-size:7px;line-height:9px;color:#e1e0e1;transform:scaleX(0.9700);transform-origin:0 0;">-20</div>
<div class="t" style="left:477.59px;top:560.67px;font-size:7px;line-height:9px;color:#e1e0e1;transform:scaleX(0.9700);transform-origin:0 0;">-15</div>
<div class="t" style="left:493.42px;top:560.67px;font-size:7px;line-height:9px;color:#e1e0e1;transform:scaleX(0.9700);transform-origin:0 0;">-10</div>
<div class="t" style="left:511.14px;top:560.67px;font-size:7px;line-height:9px;color:#e1e0e1;transform:scaleX(0.9700);transform-origin:0 0;">-5</div>
<div class="t" style="left:528.11px;top:560.67px;font-size:7px;line-height:9px;color:#e1e0e1;transform:scaleX(0.9700);transform-origin:0 0;">0</div>
<div class="t" style="left:568.70px;top:478.34px;font-size:12px;line-height:16px;color:#e1e0e1;transform:scaleX(0.8151);transform-origin:0 0;">Fade</div>
<div class="t" style="left:558.00px;top:502.34px;font-size:12px;line-height:16px;color:#e1e0e1;transform:scaleX(0.9039);transform-origin:0 0;">Duration</div>
<div class="t" style="left:612.50px;top:502.34px;font-size:12px;line-height:16px;color:#e1e0e1;transform:scaleX(0.9146);transform-origin:0 0;">300 ms</div>
<div class="t" style="left:753.06px;top:477.84px;font-size:12px;line-height:16px;color:#e1e0e1;transform:scaleX(0.9100);transform-origin:0 0;">Start Streaming</div>
<div class="t" style="left:753.06px;top:501.84px;font-size:12px;line-height:16px;color:#e1e0e1;transform:scaleX(0.9100);transform-origin:0 0;">Start Recording</div>
<div class="t" style="left:741.63px;top:525.84px;font-size:12px;line-height:16px;color:#e1e0e1;transform:scaleX(0.9100);transform-origin:0 0;">Start Virtual Camera</div>
<div class="t" style="left:760.34px;top:549.84px;font-size:12px;line-height:16px;color:#e1e0e1;transform:scaleX(0.9100);transform-origin:0 0;">Studio Mode</div>
<div class="t" style="left:771.27px;top:573.84px;font-size:12px;line-height:16px;color:#e1e0e1;transform:scaleX(0.9100);transform-origin:0 0;">Settings</div>
<div class="t" style="left:781.89px;top:597.84px;font-size:12px;line-height:16px;color:#e1e0e1;transform:scaleX(0.9100);transform-origin:0 0;">Exit</div>
<div class="t" style="left:493.30px;top:650.04px;font-size:12px;line-height:16px;color:#e1e0e1;transform:scaleX(0.9155);transform-origin:0 0;">LIVE: 00:00:00</div>
<div class="t" style="left:599.60px;top:650.04px;font-size:12px;line-height:16px;color:#e1e0e1;transform:scaleX(0.8778);transform-origin:0 0;">REC: 00:00:00</div>
<div class="t" style="left:696.00px;top:650.04px;font-size:12px;line-height:16px;color:#e1e0e1;transform:scaleX(0.9133);transform-origin:0 0;">CPU: 0.4%, 60.00 fps</div>
</body></html>
